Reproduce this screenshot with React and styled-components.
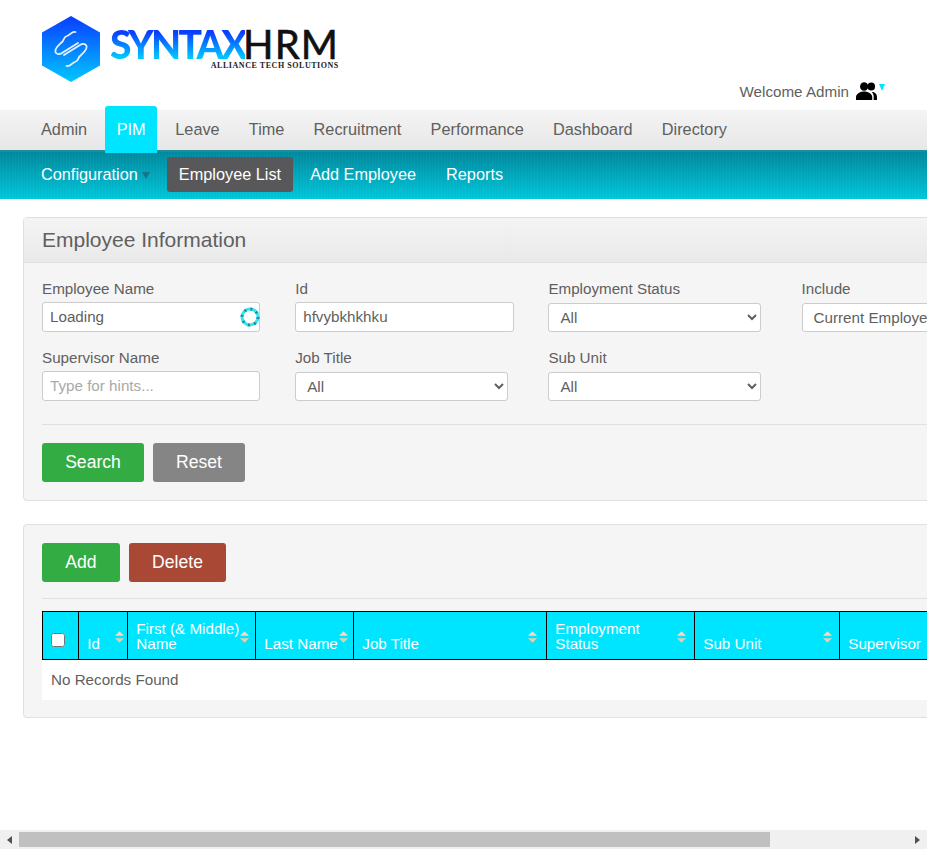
import React from "react"
import styled, { createGlobalStyle } from "styled-components"

const Global = createGlobalStyle`
  html, body {
    margin: 0;
    padding: 0;
    overflow: hidden;
    background: #fff;
    font-family: "Liberation Sans", Arial, sans-serif;
    color: #5f5f5f;
  }
  * { box-sizing: border-box; }
`

const Page = styled.div`
  display: flex;
  flex-direction: column;
  width: 927px;
  height: 849px;
`
const Content = styled.div`
  flex: 1;
  min-height: 0;
  overflow: hidden;
`

/* header */
const Header = styled.header`
  display: flex;
  justify-content: space-between;
  height: 110px;
  padding: 16px 42px 0 42px;
`
const Brand = styled.div`
  display: flex;
  gap: 10px;
  height: 66px;
`
const BrandText = styled.div`
  display: flex;
  flex-direction: column;
  padding-top: 11px;
`
const BrandName = styled.div`
  display: flex;
  height: 35px;
  font-family: Lato, "Liberation Sans", sans-serif;
  font-size: 39px;
  line-height: 35px;
`
const Syntax = styled.span`
  font-weight: 900;
  letter-spacing: -2.7px;
  background: linear-gradient(#0a3cff 15%, #00c4ff 85%);
  -webkit-background-clip: text;
  background-clip: text;
  color: transparent;
`
const Hrm = styled.span`
  margin-left: -2px;
  font-size: 40px;
  font-weight: 400;
  color: #111;
  letter-spacing: 1px;
  -webkit-text-stroke: 0.6px #111;
`
const Tagline = styled.div`
  align-self: flex-end;
  font-family: "Liberation Serif", serif;
  font-weight: 700;
  font-size: 8px;
  line-height: 8px;
  letter-spacing: 0.55px;
  color: #222;
`
const Welcome = styled.div`
  display: flex;
  align-items: center;
  align-self: flex-end;
  height: 26px;
  margin-bottom: 6px;
  font-size: 15.2px;
`
const People = styled.svg`
  margin-left: 7px;
`
const Caret = styled.span`
  width: 0;
  height: 0;
  margin-top: ${props => props.$top || 0}px;
  margin-left: ${props => props.$left || 0}px;
  border-left: ${props => props.$size}px solid transparent;
  border-right: ${props => props.$size}px solid transparent;
  border-top: 7px solid ${props => props.$color};
`

/* navigation */
const TopNav = styled.nav`
  display: flex;
  height: 40px;
  padding-left: 26.4px;
  background: linear-gradient(#f4f4f4, #e7e7e7);
`
const TopItem = styled.a`
  display: flex;
  align-items: center;
  justify-content: center;
  height: ${props => (props.$active ? "47px" : "40px")};
  margin: ${props => (props.$active ? "-4px 3.5px 0" : "0")};
  padding: 0 ${props => (props.$active ? "11.5px" : "14.6px")} ${props => (props.$active ? "0" : "2px")};
  border-radius: 3px 3px 0 0;
  background: ${props => (props.$active ? "#00e5ff" : "transparent")};
  color: ${props => (props.$active ? "#fff" : "#5f5f5f")};
  font-size: 16.3px;
  position: relative;
  z-index: 1;
`
const SubNav = styled.nav`
  display: flex;
  align-items: flex-start;
  height: 49px;
  padding: 5px 0 0 29px;
  border-top: 2px solid #1c8c9c;
  background:
    repeating-linear-gradient(90deg, rgba(255, 255, 255, 0.03) 0 1px, transparent 1px 3px),
    linear-gradient(#00889d, #00c6da);
`
const SubItem = styled.a`
  display: flex;
  align-items: center;
  height: 35px;
  padding: 0 12px;
  border-radius: 3px;
  background: ${props => (props.$active ? "#58585a" : "transparent")};
  color: #fff;
  font-size: 16.3px;
  margin-right: ${props => props.$gap || 0}px;
`

/* panels */
const Main = styled.main`
  padding: 18px 0 0 23px;
  width: 1102px;
`
const Panel = styled.section`
  background: #f5f5f5;
  border: 1px solid #e0e0e0;
  border-radius: 4px;
  margin-bottom: 23px;
`
const PanelHead = styled.div`
  height: 45px;
  padding-left: 18px;
  line-height: 44px;
  font-size: 21px;
  color: #5f5f5f;
  background: linear-gradient(#f4f4f4, #e9e9e9);
  border-bottom: 1px solid #e0e0e0;
`
const PanelBody = styled.div`
  padding: ${props => props.$pad || "17px 18px 18px"};
`
const FormGrid = styled.div`
  display: grid;
  grid-template-columns: repeat(4, 253.2px);
  grid-auto-rows: 69px;
  height: 144px;
`
const Field = styled.div`
  display: flex;
  flex-direction: column;
  gap: 4px;
`
const Label = styled.label`
  font-size: 15.2px;
  line-height: 18px;
`
const InputWrap = styled.div`
  position: relative;
  width: 218px;
`
const Input = styled.input`
  width: ${props => props.$width || 218}px;
  height: 30px;
  padding: 0 7px 1px;
  border: 1px solid #ccc;
  border-radius: 3px;
  background: #fff;
  color: #5f5f5f;
  font-family: inherit;
  font-size: 15.2px;
  outline: none;
  &::placeholder {
    color: #a9a9a9;
    opacity: 1;
  }
`
const Spinner = styled.svg`
  position: absolute;
  top: 5px;
  right: 0;
`
const Select = styled.select`
  width: ${props => props.$width || 213}px;
  height: 29px;
  margin-top: 1px;
  padding: 0 7px;
  border: 1px solid #ccc;
  border-radius: 3px;
  background: #fff;
  color: #5f5f5f;
  font-family: inherit;
  font-size: 15.2px;
  outline: none;
`
const Divider = styled.hr`
  margin: ${props => props.$margin || "0 0 18px"};
  border: 0;
  border-top: 1px solid #e0e0e0;
`
const Buttons = styled.div`
  display: flex;
  gap: 9px;
`
const Button = styled.button`
  width: ${props => props.$width}px;
  height: 39px;
  padding: 0;
  border: none;
  border-radius: 3px;
  background: ${props => props.$color};
  color: #fff;
  font-family: inherit;
  font-size: 17.6px;
`

/* table */
const Table = styled.table`
  width: 1041px;
  table-layout: fixed;
  border-collapse: collapse;
  background: #fff;
`
const Th = styled.th`
  position: relative;
  height: 48px;
  padding: 0 15px 8px 8.3px;
  border: 1px solid #000;
  background: #00e5ff;
  color: #fff;
  font-size: 15.2px;
  font-weight: 400;
  line-height: 15px;
  text-align: left;
  vertical-align: bottom;
`
const Td = styled.td`
  height: 40px;
  padding: 0 8.5px 1px;
  font-size: 15.2px;
`
const Sort = styled.svg`
  position: absolute;
  right: ${props => props.$right || 4}px;
  top: 19px;
`
const Check = styled.input`
  display: block;
  width: 14px;
  height: 14px;
  margin: 0 0 4px -0.5px;
`

/* scrollbar */
const ScrollBar = styled.div`
  display: flex;
  align-items: center;
  flex: none;
  height: 19px;
  background: #f0f0f0;
`
const ScrollArrow = styled.span`
  display: flex;
  flex: none;
  justify-content: center;
  width: 19px;
`
const ScrollThumb = styled.div`
  flex: none;
  width: 751px;
  height: 15px;
  background: #c0c0c0;
`
const ScrollRest = styled.div`
  flex: 1;
`
const Arrow = styled.span`
  width: 0;
  height: 0;
  border-top: 4.5px solid transparent;
  border-bottom: 4.5px solid transparent;
  ${props => (props.$left ? "border-right: 5px solid #505050;" : "border-left: 5px solid #505050;")}
`

const squiggle = "M33.5 16 C29.5 15 28.5 19 25 20 C21 21 22.5 24 20 26 C17 29 12.5 32 13.5 36 C14.5 39 18 38.5 20 37 L36 27"

const Logo = () => (
  <svg width="58" height="66" viewBox="0 0 58 66">
    <defs>
      <linearGradient id="hex" x1="0" y1="0" x2="0" y2="1">
        <stop offset="0" stopColor="#0a3cff" />
        <stop offset="1" stopColor="#00c8ff" />
      </linearGradient>
    </defs>
    <path d="M29 0 L58 16.5 V49.5 L29 66 L0 49.5 V16.5 Z" fill="url(#hex)" />
    <g fill="none" stroke="#fff" strokeWidth="1.8" strokeLinecap="round" strokeLinejoin="round" opacity="0.9">
      <path d={squiggle} />
      <path d={squiggle} transform="rotate(180 29 33)" />
    </g>
  </svg>
)

const PeopleIcon = () => (
  <People width="21" height="18" viewBox="0 0 22 18" preserveAspectRatio="none" fill="#000">
    <circle cx="8.5" cy="4.5" r="4.3" />
    <circle cx="16" cy="4.5" r="4" />
    <path d="M0 18 V15 C0 11.5 5 9.5 8.5 9.5 C12 9.5 17 11.5 17 15 V18 Z" />
    <path d="M18.5 18 V14.5 C18.5 12.5 17.5 11 16.5 10 C19 9.8 22 11.5 22 15 V18 Z" />
  </People>
)

const SortIcon = ({ right }) => (
  <Sort $right={right} width="9" height="12" viewBox="0 0 10 13">
    <path d="M5 0 L10 5 H0 Z" fill="#f3dcc0" />
    <path d="M5 13 L10 8 H0 Z" fill="#e6cfa8" />
  </Sort>
)

const LoadingSpinner = () => (
  <Spinner width="20" height="20" viewBox="0 0 20 20">
    <circle cx="10" cy="10" r="8" fill="none" stroke="#35e4f5" strokeWidth="3" />
    <circle cx="10" cy="10" r="8" fill="none" stroke="#1c8c9c" strokeWidth="3" strokeDasharray="2 4.3" />
  </Spinner>
)

const columns = [
  { label: "Id", width: 49, right: 3 },
  { label: "First (& Middle) Name", width: 128, right: 6 },
  { label: "Last Name", width: 98, right: 5 },
  { label: "Job Title", width: 193, right: 9 },
  { label: "Employment Status", width: 148, right: 8 },
  { label: "Sub Unit", width: 145, right: 7 },
  { label: "Supervisor", width: 244, right: 8 }
]

const App = () => {
  return (
    <Page>
      <Global />
      <Content>
        <Header>
          <Brand>
            <Logo />
            <BrandText>
              <BrandName>
                <Syntax>SYNTAX</Syntax>
                <Hrm>HRM</Hrm>
              </BrandName>
              <Tagline>ALLIANCE TECH SOLUTIONS</Tagline>
            </BrandText>
          </Brand>
          <Welcome>
            Welcome Admin
            <PeopleIcon />
            <Caret $color="#00e5ff" $size={3.5} $top={-7} $left={2} />
          </Welcome>
        </Header>
        <TopNav>
          <TopItem>Admin</TopItem>
          <TopItem $active>PIM</TopItem>
          <TopItem>Leave</TopItem>
          <TopItem>Time</TopItem>
          <TopItem>Recruitment</TopItem>
          <TopItem>Performance</TopItem>
          <TopItem>Dashboard</TopItem>
          <TopItem>Directory</TopItem>
        </TopNav>
        <SubNav>
          <SubItem $gap={5}>
            Configuration
            <Caret $color="#14768a" $size={4.5} $left={4} $top={2} />
          </SubItem>
          <SubItem $active $gap={5}>Employee List</SubItem>
          <SubItem $gap={6}>Add Employee</SubItem>
          <SubItem>Reports</SubItem>
        </SubNav>
        <Main>
          <Panel>
            <PanelHead>Employee Information</PanelHead>
            <PanelBody>
              <FormGrid>
                <Field>
                  <Label>Employee Name</Label>
                  <InputWrap>
                    <Input defaultValue="Loading" />
                    <LoadingSpinner />
                  </InputWrap>
                </Field>
                <Field>
                  <Label>Id</Label>
                  <Input $width={219} defaultValue="hfvybkhkhku" />
                </Field>
                <Field>
                  <Label>Employment Status</Label>
                  <Select><option>All</option></Select>
                </Field>
                <Field>
                  <Label>Include</Label>
                  <Select $width={240}><option>Current Employees Only</option></Select>
                </Field>
                <Field>
                  <Label>Supervisor Name</Label>
                  <Input placeholder="Type for hints..." />
                </Field>
                <Field>
                  <Label>Job Title</Label>
                  <Select><option>All</option></Select>
                </Field>
                <Field>
                  <Label>Sub Unit</Label>
                  <Select><option>All</option></Select>
                </Field>
              </FormGrid>
              <Divider />
              <Buttons>
                <Button $width={102} $color="#33ac43">Search</Button>
                <Button $width={92} $color="#858585">Reset</Button>
              </Buttons>
            </PanelBody>
          </Panel>
          <Panel>
            <PanelBody $pad="18px 18px 17px">
              <Buttons>
                <Button $width={78} $color="#33ac43">Add</Button>
                <Button $width={97} $color="#a94835">Delete</Button>
              </Buttons>
              <Divider $margin="16px 0 12px" />
              <Table>
                <colgroup>
                  <col style={{ width: 36 }} />
                  {columns.map(col => <col key={col.label} style={{ width: col.width }} />)}
                </colgroup>
                <thead>
                  <tr>
                    <Th><Check type="checkbox" /></Th>
                    {columns.map(col => (
                      <Th key={col.label}>
                        {col.label}
                        <SortIcon right={col.right} />
                      </Th>
                    ))}
                  </tr>
                </thead>
                <tbody>
                  <tr>
                    <Td colSpan={8}>No Records Found</Td>
                  </tr>
                </tbody>
              </Table>
            </PanelBody>
          </Panel>
        </Main>
      </Content>
      <ScrollBar>
        <ScrollArrow><Arrow $left /></ScrollArrow>
        <ScrollThumb />
        <ScrollRest />
        <ScrollArrow><Arrow /></ScrollArrow>
      </ScrollBar>
    </Page>
  )
}

export default App
